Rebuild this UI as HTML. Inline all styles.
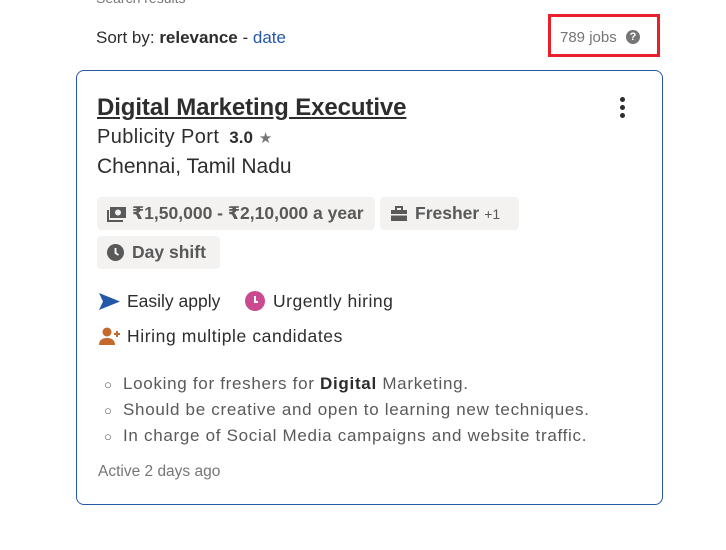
<!DOCTYPE html>
<html><head><meta charset="utf-8"><style>
*{margin:0;padding:0;box-sizing:border-box}
body{width:726px;height:550px;background:#fff;font-family:"Liberation Sans","DejaVu Sans",sans-serif;color:#2d2d2d;position:relative;overflow:hidden}
.abs{position:absolute;white-space:nowrap}
.card{position:absolute;left:76px;top:70px;width:587px;height:435px;border:1px solid #2557a7;border-radius:8px}
.tag{position:absolute;background:#f3f2f1;border-radius:4px;height:33px;font-weight:bold;font-size:17.5px;color:#595959;display:flex;align-items:center;padding:0 10px;white-space:nowrap}
</style></head><body>
<div class="abs" style="left:96px;top:-10px;font-size:14px;color:#767676">Search results</div>
<div class="abs" style="left:96px;top:28px;font-size:17px">Sort by: <b>relevance</b> - <span style="color:#2557a7">date</span></div>
<div class="abs" style="left:548px;top:14px;width:112px;height:43px;border:3px solid #e8202a"></div>
<div class="abs" style="left:560px;top:29px;font-size:15px;color:#767676">789 jobs</div>
<div class="abs" style="left:626px;top:30px;width:14px;height:14px;border-radius:50%;background:#767676;color:#fff;font-size:11px;font-weight:bold;text-align:center;line-height:14px">?</div>
<div class="card"></div>
<div class="abs" style="left:97px;top:94px;font-size:24px;font-weight:bold;text-decoration:underline;letter-spacing:-0.1px">Digital Marketing Executive</div>
<div class="abs" style="left:620px;top:97px;width:5px">
<div style="width:5px;height:5px;border-radius:50%;background:#2d2d2d;margin-bottom:3px"></div>
<div style="width:5px;height:5px;border-radius:50%;background:#2d2d2d;margin-bottom:3px"></div>
<div style="width:5px;height:5px;border-radius:50%;background:#2d2d2d"></div></div>
<div class="abs" style="left:97px;top:126px;font-size:20px;letter-spacing:0.4px">Publicity Port <b style="font-size:17px;margin-left:4px;letter-spacing:0">3.0</b> <span style="color:#767676;font-size:15px">★</span></div>
<div class="abs" style="left:97px;top:155px;font-size:21px">Chennai, Tamil Nadu</div>
<div class="tag" style="left:97px;top:197px;width:278px"><svg width="20" height="16" viewBox="0 0 20 16" style="margin-right:5px"><rect x="3" y="1" width="16" height="11" fill="#595959"/><circle cx="11" cy="6.5" r="3" fill="#f3f2f1"/><path d="M1 4v11h15" stroke="#595959" stroke-width="2" fill="none"/></svg>₹1,50,000 - ₹2,10,000 a year</div>
<div class="tag" style="left:380px;top:197px;width:139px"><svg width="18" height="16" viewBox="0 0 18 16" style="margin-right:7px"><rect x="1" y="4" width="16" height="11" fill="#595959"/><rect x="6" y="1" width="6" height="4" stroke="#595959" stroke-width="2" fill="none"/><rect x="1" y="8" width="16" height="1.5" fill="#f3f2f1"/></svg>Fresher <span style="font-weight:normal;font-size:14px;margin-left:5px">+1</span></div>
<div class="tag" style="left:97px;top:236px;width:123px"><svg width="17" height="17" viewBox="0 0 17 17" style="margin-right:8px"><circle cx="8.5" cy="8.5" r="8.5" fill="#595959"/><path d="M8.5 4v5l3 2" stroke="#fff" stroke-width="1.8" fill="none"/></svg>Day shift</div>
<svg class="abs" style="left:99px;top:293px" width="21" height="17" viewBox="0 0 21 17"><path d="M0 0L21 8.5L0 17L4 8.5Z" fill="#2557a7"/></svg>
<div class="abs" style="left:127px;top:291px;font-size:17.5px">Easily apply</div>
<svg class="abs" style="left:245px;top:291px" width="20" height="20" viewBox="0 0 20 20"><circle cx="10" cy="10" r="10" fill="#c94a8e"/><path d="M10 5v6h3" stroke="#fff" stroke-width="2" fill="none"/></svg>
<div class="abs" style="left:273px;top:291px;font-size:17.5px;letter-spacing:0.5px">Urgently hiring</div>
<svg class="abs" style="left:99px;top:327px" width="22" height="18" viewBox="0 0 22 18"><circle cx="8" cy="5" r="4.5" fill="#c4682b"/><path d="M0 18c0-5 3.5-7 8-7s8 2 8 7z" fill="#c4682b"/><path d="M18 4v6M15 7h6" stroke="#c4682b" stroke-width="2"/></svg>
<div class="abs" style="left:127px;top:326px;font-size:17.5px;letter-spacing:0.6px">Hiring multiple candidates</div>
<div class="abs" style="left:104px;top:371px;font-size:17px;color:#595959;line-height:25px;letter-spacing:0.7px">
<div><span style="display:inline-block;width:19px;font-size:13px">○</span>Looking for freshers for <b style="color:#2d2d2d">Digital</b> Marketing.</div>
<div><span style="display:inline-block;width:19px;font-size:13px">○</span>Should be creative and open to learning new techniques.</div>
<div><span style="display:inline-block;width:19px;font-size:13px">○</span>In charge of Social Media campaigns and website traffic.</div></div>
<div class="abs" style="left:98px;top:463px;font-size:15.5px;color:#767676">Active 2 days ago</div>
</body></html>
